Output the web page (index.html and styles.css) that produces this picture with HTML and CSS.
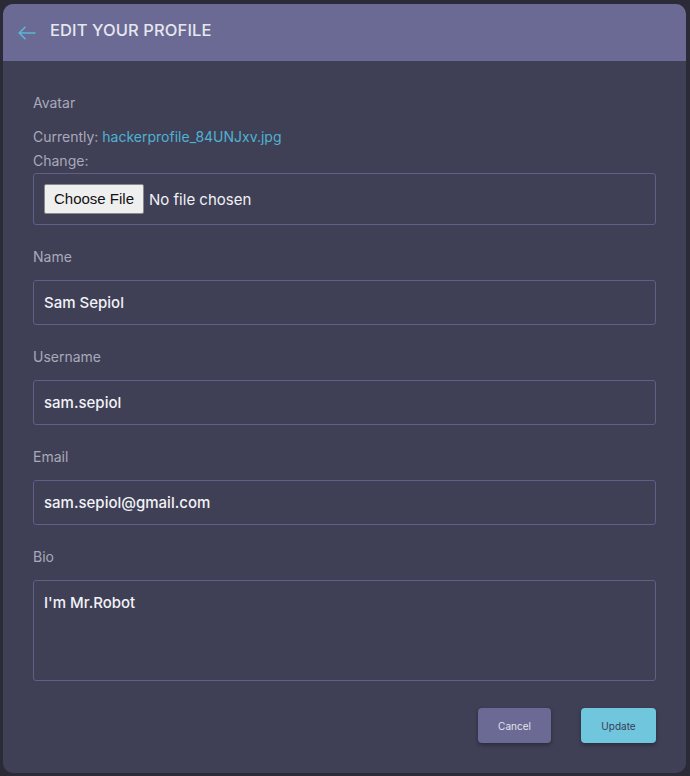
FILE: index.html
```html
<!DOCTYPE html>
<html lang="en">
<head>
<meta charset="utf-8">
<title>Edit your profile</title>
<link rel="stylesheet" href="styles.css">
</head>
<body>
<div class="card">
  <header class="card-header">
    <a class="back" href="#" aria-label="Back">
      <svg width="18" height="14" viewBox="0 0 18 14" fill="none" stroke="#5db5d3" stroke-width="1.6" stroke-linecap="round" stroke-linejoin="round">
        <path d="M17 7H1.5M7 1.2L1.2 7l5.8 5.8"/>
      </svg>
    </a>
    <h1 class="title">EDIT YOUR PROFILE</h1>
  </header>
  <form class="form">
    <div class="group">
      <div class="label">Avatar</div>
      <div class="current">Currently: <a class="link" href="#">hackerprofile_84UNJxv.jpg</a></div>
      <div class="change">Change:</div>
      <div class="filebox">
        <span class="file-btn">Choose File</span>
        <span class="file-status">No file chosen</span>
      </div>
    </div>
    <div class="group">
      <label class="label">Name</label>
      <div class="input">Sam Sepiol</div>
    </div>
    <div class="group">
      <label class="label">Username</label>
      <div class="input">sam.sepiol</div>
    </div>
    <div class="group">
      <label class="label">Email</label>
      <div class="input">sam.sepiol@gmail.com</div>
    </div>
    <div class="group">
      <label class="label">Bio</label>
      <div class="input textarea">I'm Mr.Robot</div>
    </div>
    <div class="actions">
      <button type="button" class="btn btn-cancel">Cancel</button>
      <button type="button" class="btn btn-update">Update</button>
    </div>
  </form>
</div>
</body>
</html>
```
FILE: styles.css
```css
* { box-sizing: border-box; }
html, body { margin: 0; padding: 0; }
body {
  background: #2b2b37;
  font-family: Inter, "Noto Sans", sans-serif;
  width: 690px;
  height: 776px;
  padding: 4px 4px 3px 3px;
}
.card {
  background: #3f4056;
  border-radius: 10px;
  overflow: hidden;
  height: 769px;
  display: flex;
  flex-direction: column;
}
.card-header {
  background: #6a6a95;
  height: 57px;
  display: flex;
  align-items: center;
  padding-left: 15px;
  gap: 14px;
}
.back { display: flex; align-items: center; padding-top: 1px; }
.title {
  margin: 0 0 5px 0;
  font-size: 16.5px;
  font-weight: 500;
  color: #e6e6ef;
  letter-spacing: 0.1px;
}
.form {
  padding: 32px 30px 0 30px;
  display: flex;
  flex-direction: column;
}
.group { margin-bottom: 22px; display: flex; flex-direction: column; }
.label {
  font-size: 14px;
  line-height: 20px;
  color: #a9a9b9;
  margin-bottom: 13px;
}
.current, .change {
  font-size: 14px;
  line-height: 24px;
  color: #a9a9b9;
}
.current { margin-top: -1px; }
.link { color: #4fb2d3; text-decoration: none; }
.filebox {
  margin-top: 0;
  height: 52px;
  border: 1px solid #5f5f88;
  border-radius: 3px;
  display: flex;
  align-items: center;
  padding-left: 10px;
  gap: 5px;
}
.file-btn {
  background: #efefef;
  border: 1px solid #8a8a8a;
  border-radius: 2px;
  color: #111;
  font-family: "Liberation Sans", Arial, sans-serif;
  font-size: 15px;
  height: 30px;
  line-height: 28px;
  padding: 0 9px;
}
.file-status {
  color: #f0f0f5;
  font-size: 15px;
}
.input {
  height: 45px;
  border: 1px solid #5f5f88;
  border-radius: 3px;
  padding: 0 10px;
  display: flex;
  align-items: center;
  color: #f2f2f7;
  font-size: 15px;
  font-weight: 500;
}
.textarea {
  height: 101px;
  align-items: flex-start;
  padding-top: 12px;
}
.actions {
  display: flex;
  justify-content: flex-end;
  gap: 30px;
  margin-top: 5px;
}
.btn {
  height: 35px;
  border: none;
  border-radius: 4px;
  font-family: Inter, sans-serif;
  font-size: 10px;
  box-shadow: 0 2px 4px rgba(0,0,0,0.35);
  cursor: pointer;
}
.btn-cancel { width: 73px; background: #6a6a95; color: #e4e4ee; }
.btn-update { width: 75px; background: #6fc6dd; color: #3a3c55; }
```
